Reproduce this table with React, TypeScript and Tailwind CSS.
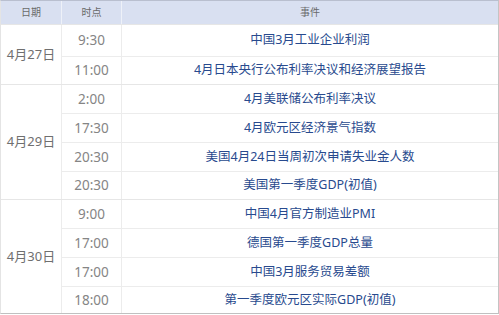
import React from "react";

const groups = [
  {
    date: "4月27日",
    rows: [
      { t: "9:30", e: "中国3月工业企业利润", h: 32 },
      { t: "11:00", e: "4月日本央行公布利率决议和经济展望报告", h: 28 },
    ],
  },
  {
    date: "4月29日",
    rows: [
      { t: "2:00", e: "4月美联储公布利率决议", h: 29 },
      { t: "17:30", e: "4月欧元区经济景气指数", h: 29 },
      { t: "20:30", e: "美国4月24日当周初次申请失业金人数", h: 29 },
      { t: "20:30", e: "美国第一季度GDP(初值)", h: 28 },
    ],
  },
  {
    date: "4月30日",
    rows: [
      { t: "9:00", e: "中国4月官方制造业PMI", h: 29 },
      { t: "17:00", e: "德国第一季度GDP总量", h: 29 },
      { t: "17:00", e: "中国3月服务贸易差额", h: 29 },
      { t: "18:00", e: "第一季度欧元区实际GDP(初值)", h: 27 },
    ],
  },
];

export default function App() {
  return (
    <div
      className="w-[499px] h-[315px] bg-white overflow-hidden"
      style={{ fontFamily: '"Noto Sans", "Noto Sans CJK SC", sans-serif' }}
    >
      <div className="w-[499px] border-l border-l-[#e4e4e4] border-r border-r-[#c4c4c4] border-t border-t-[#b9bfcf] border-b border-b-[#c0c0c0]">
        <div className="flex h-[23px] bg-[#d9e0f1] text-[10px] text-[#6a6a6a]">
          <div className="w-[61px] border-r border-r-[#eef1f8] flex items-center justify-center">日期</div>
          <div className="w-[60px] border-r border-r-[#eef1f8] flex items-center justify-center">时点</div>
          <div className="flex-1 flex items-center justify-center">事件</div>
        </div>
        {groups.map((g, gi) => (
          <div key={gi} className="flex border-t border-t-[#e6e6e6]">
            <div className="w-[61px] border-r border-r-[#ececec] flex items-center justify-center text-[13px] text-[#6f6f6f]">
              {g.date}
            </div>
            <div className="flex-1 flex flex-col">
              {g.rows.map((r, ri) => (
                <div
                  key={ri}
                  className={`flex ${ri > 0 ? "border-t border-t-[#ececec]" : ""}`}
                  style={{ height: ri > 0 ? r.h : r.h - 1 }}
                >
                  <div className="w-[60px] border-r border-r-[#ececec] flex items-center justify-center text-[13.5px] text-[#858585]">
                    {r.t}
                  </div>
                  <div className="flex-1 flex items-center justify-center text-[12.5px] text-[#284a8e]">
                    {r.e}
                  </div>
                </div>
              ))}
            </div>
          </div>
        ))}
      </div>
    </div>
  );
}
